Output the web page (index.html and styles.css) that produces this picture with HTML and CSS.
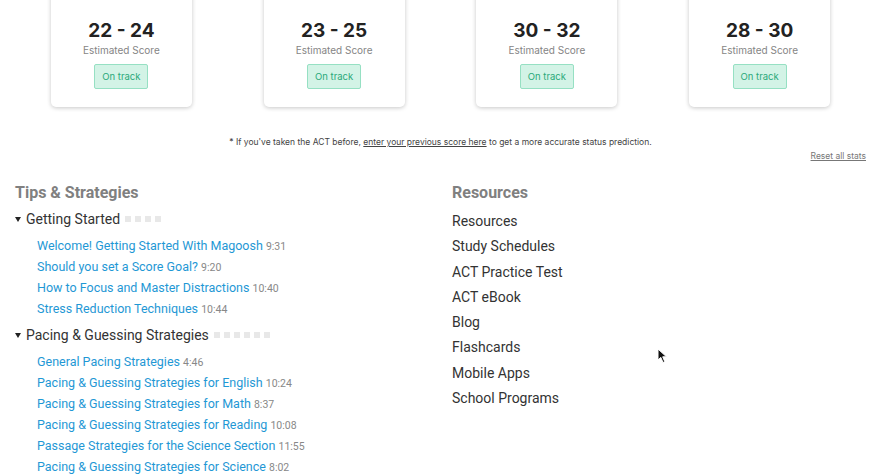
FILE: index.html
```html
<!DOCTYPE html>
<html lang="en">
<head>
    <meta charset="UTF-8">
    <meta name="viewport" content="width=device-width, initial-scale=1.0">
    <title>ACT Dashboard</title>
    <link rel="stylesheet" href="styles.css">
</head>
<body>

    <div class="page">

        <!-- score cards -->
        <div class="stats">
            <div class="card">
                <div class="score">22 - 24</div>
                <div class="score-label">Estimated Score</div>
                <span class="status">On track</span>
            </div>
            <div class="card">
                <div class="score">23 - 25</div>
                <div class="score-label">Estimated Score</div>
                <span class="status">On track</span>
            </div>
            <div class="card">
                <div class="score">30 - 32</div>
                <div class="score-label">Estimated Score</div>
                <span class="status">On track</span>
            </div>
            <div class="card">
                <div class="score">28 - 30</div>
                <div class="score-label">Estimated Score</div>
                <span class="status">On track</span>
            </div>
        </div>

        <p class="note">* If you've taken the ACT before, <a href="#">enter your previous score here</a> to get a more accurate status prediction.</p>
        <div class="reset"><a href="#">Reset all stats</a></div>

        <div class="columns">
            <div class="tips">
                <h3>Tips &amp; Strategies</h3>

                <div class="group">
                    <div class="group-title"><span class="caret"></span>Getting Started<span class="dots"><i></i><i></i><i></i><i></i></span></div>
                    <ul class="lessons">
                        <li><a href="#">Welcome! Getting Started With Magoosh</a> <span class="time">9:31</span></li>
                        <li><a href="#">Should you set a Score Goal?</a> <span class="time">9:20</span></li>
                        <li><a href="#">How to Focus and Master Distractions</a> <span class="time">10:40</span></li>
                        <li><a href="#">Stress Reduction Techniques</a> <span class="time">10:44</span></li>
                    </ul>
                </div>

                <div class="group">
                    <div class="group-title"><span class="caret"></span>Pacing &amp; Guessing Strategies<span class="dots"><i></i><i></i><i></i><i></i><i></i><i></i></span></div>
                    <ul class="lessons">
                        <li><a href="#">General Pacing Strategies</a> <span class="time">4:46</span></li>
                        <li><a href="#">Pacing &amp; Guessing Strategies for English</a> <span class="time">10:24</span></li>
                        <li><a href="#">Pacing &amp; Guessing Strategies for Math</a> <span class="time">8:37</span></li>
                        <li><a href="#">Pacing &amp; Guessing Strategies for Reading</a> <span class="time">10:08</span></li>
                        <li><a href="#">Passage Strategies for the Science Section</a> <span class="time">11:55</span></li>
                        <li><a href="#">Pacing &amp; Guessing Strategies for Science</a> <span class="time">8:02</span></li>
                    </ul>
                </div>
            </div>

            <div class="resources">
                <h3>Resources</h3>
                <ul class="res-list">
                    <li><a href="#">Resources</a></li>
                    <li><a href="#">Study Schedules</a></li>
                    <li><a href="#">ACT Practice Test</a></li>
                    <li><a href="#">ACT eBook</a></li>
                    <li><a href="#">Blog</a></li>
                    <li><a href="#">Flashcards</a></li>
                    <li><a href="#">Mobile Apps</a></li>
                    <li><a href="#">School Programs</a></li>
                </ul>
            </div>
        </div>

    </div>

    <!-- mouse pointer caught in the screenshot -->
    <svg class="pointer" width="12" height="16" viewBox="0 0 12 16">
        <path d="M1 1 L1 12 L3.8 9.4 L6 14.5 L7.8 13.7 L5.7 8.8 L9.5 8.8 Z" fill="#111" stroke="#fff" stroke-width="1"/>
    </svg>

</body>
</html>
```

FILE: styles.css
```css
/* ====== base ====== */
* {
    margin: 0;
    padding: 0;
    box-sizing: border-box;
}
body {
    background: #fff;
    color: #333;
    font-family: 'Roboto', 'Liberation Sans', sans-serif;
    overflow: hidden;
}
a {
    text-decoration: none;
    color: inherit;
}
ul {
    list-style: none;
}

.page {
    padding: 0 22px 0 15px;
}

/* ====== score cards ====== */
.stats {
    display: grid;
    grid-template-columns: repeat(4, 1fr);
    margin-top: -40px;
}
.card {
    justify-self: center;
    width: 141px;
    padding: 59px 0 18px;
    background: #fff;
    border-radius: 5px;
    box-shadow: 0 1px 4px rgba(0, 0, 0, 0.22);
    text-align: center;
    font-family: 'Inter', 'Liberation Sans', sans-serif;
}
.score {
    font-size: 19px;
    line-height: 24px;
    font-weight: 700;
    color: #222;
}
.score-label {
    font-size: 10px;
    line-height: 14px;
    color: #858585;
}
.status {
    display: inline-block;
    margin-top: 7px;
    width: 54px;
    height: 25px;
    line-height: 23px;
    font-size: 9.5px;
    color: #2aa97a;
    background: #d3f3e6;
    border: 1px solid #96e0c3;
    border-radius: 2px;
}

/* ====== note + reset ====== */
.note {
    margin-top: 29px;
    text-align: center;
    font-family: 'Inter', 'Liberation Sans', sans-serif;
    font-size: 8.5px;
    line-height: 12px;
    color: #444;
}
.note a {
    text-decoration: underline;
}
.reset {
    margin-top: 2px;
    text-align: right;
    font-family: 'Inter', 'Liberation Sans', sans-serif;
    font-size: 8.5px;
    line-height: 12px;
}
.reset a {
    color: #777;
    text-decoration: underline;
}

/* ====== columns ====== */
.columns {
    display: grid;
    grid-template-columns: 437px 1fr;
    margin-top: 21px;
}
h3 {
    font-size: 16px;
    line-height: 20px;
    font-weight: 700;
    color: #808080;
}

.group-title {
    display: flex;
    align-items: center;
    margin-top: 6px;
    font-size: 14px;
    line-height: 20px;
    color: #333;
}
.group + .group .group-title {
    margin-top: 6px;
}
.caret {
    width: 0;
    height: 0;
    margin-right: 5px;
    border-left: 3.5px solid transparent;
    border-right: 3.5px solid transparent;
    border-top: 5px solid #222;
}
.dots {
    display: flex;
    gap: 4px;
    margin-left: 5px;
}
.dots i {
    width: 6px;
    height: 6px;
    background: #e8e8e8;
}

.lessons {
    margin-top: 6px;
    padding-left: 22px;
}
.lessons li {
    height: 21px;
    font-size: 12.5px;
    line-height: 21px;
    white-space: nowrap;
}
.lessons a {
    color: #1f98d5;
}
.time {
    font-size: 10.5px;
    color: #888;
}

.res-list {
    margin-top: 6px;
}
.res-list li {
    font-size: 14px;
    line-height: 25.3px;
    color: #333;
}

.pointer {
    position: absolute;
    left: 657px;
    top: 348px;
}
```
